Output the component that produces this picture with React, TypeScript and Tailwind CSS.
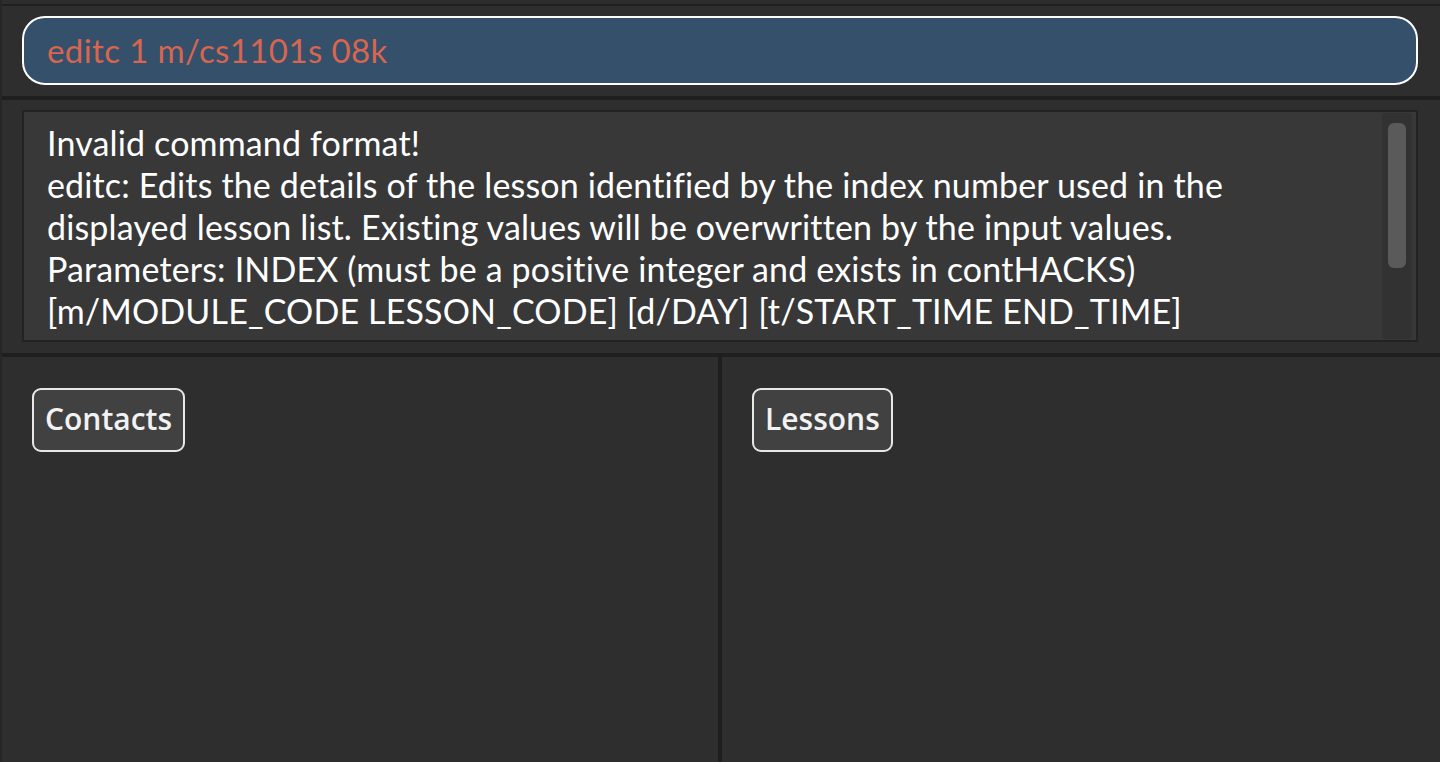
import React from "react";

const lines = [
  "Invalid command format!",
  "editc: Edits the details of the lesson identified by the index number used in the",
  "displayed lesson list. Existing values will be overwritten by the input values.",
  "Parameters: INDEX (must be a positive integer and exists in contHACKS)",
  "[m/MODULE_CODE LESSON_CODE] [d/DAY] [t/START_TIME END_TIME]",
];

const PanelButton = ({ label }: { label: string }) => (
  <div className="inline-flex h-[64px] items-center rounded-[9px] border-2 border-[#e8e8e8] bg-[#414141] px-[11px] pb-[3px] font-['Open_Sans',sans-serif] text-[30px] font-semibold text-[#f2f2f2]">
    {label}
  </div>
);

export default function App() {
  return (
    <div className="flex h-[762px] w-[1440px] flex-col overflow-hidden border-l-2 border-[#262626] bg-[#2e2e2e] font-['Lato',sans-serif]">
      <div className="h-[4px] shrink-0 bg-[#2d2d2d]" />
      <div className="h-[2px] shrink-0 bg-[#1f1f1f]" />

      {/* command box */}
      <div className="shrink-0 pb-[11px] pl-[20px] pr-[22px] pt-[10px]">
        <div className="flex h-[69px] items-center rounded-[23px] border-2 border-white bg-[#34506b] pl-[23px] text-[33px] tracking-[0.4px] text-[#d8654f]">
          editc 1 m/cs1101s 08k
        </div>
      </div>
      <div className="h-[4px] shrink-0 bg-[#1f1f1f]" />

      {/* result display */}
      <div className="shrink-0 pb-[11px] pl-[20px] pr-[22px] pt-[10px]">
        <div className="flex h-[232px] border-2 border-[#222222] bg-[#383838]">
          <div className="flex-1 overflow-hidden pl-[23px] pt-[10px] text-[34px] leading-[42px] tracking-[0.15px] text-white">
            {lines.map((l, i) => (
              <div key={i} className="whitespace-nowrap">
                {l}
              </div>
            ))}
          </div>
          <div className="my-[1px] mr-[4px] w-[30px] rounded-[4px] bg-[#323232] px-[6px] pt-[10px]">
            <div className="h-[145px] rounded-[6px] bg-[#5a5a5a]" />
          </div>
        </div>
      </div>
      <div className="h-[4px] shrink-0 bg-[#1f1f1f]" />

      {/* lists */}
      <div className="flex flex-1">
        <div className="w-[716px] pl-[30px] pt-[31px]">
          <PanelButton label="Contacts" />
        </div>
        <div className="w-[4px] bg-[#1f1f1f]" />
        <div className="flex-1 pl-[30px] pt-[31px]">
          <PanelButton label="Lessons" />
        </div>
      </div>
    </div>
  );
}
